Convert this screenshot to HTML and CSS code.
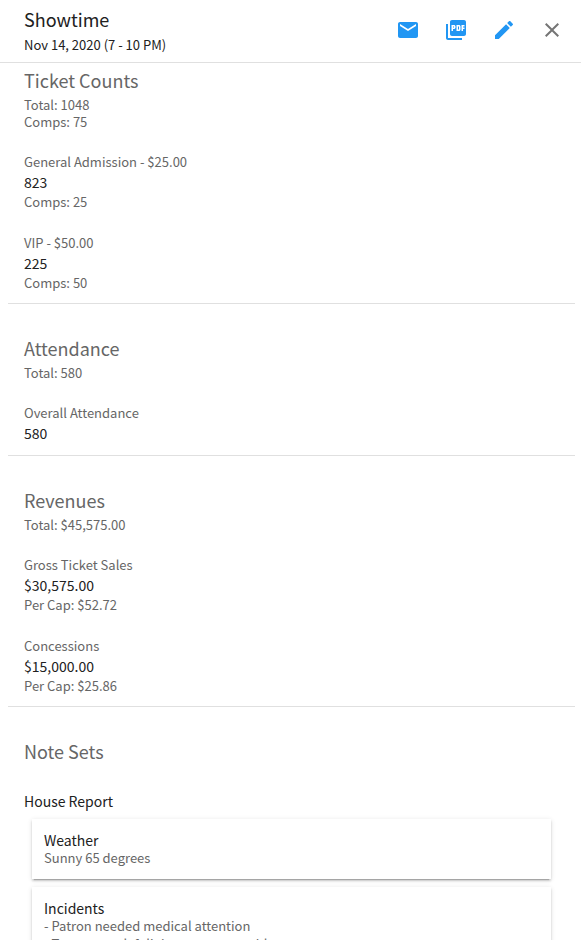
FILE: index.html
```html
<!DOCTYPE html>
<html lang="en">
<head>
  <meta charset="UTF-8">
  <meta name="viewport" content="width=device-width, initial-scale=1">
  <title>Showtime</title>
  <link rel="stylesheet" href="styles.css">
</head>
<body>
  <header class="toolbar">
    <div class="event">
      <h1>Showtime</h1>
      <p>Nov 14, 2020 (7 - 10 PM)</p>
    </div>
    <div class="actions">
      <button type="button" class="icon-button" aria-label="Email">
        <svg viewBox="0 0 24 24"><path d="M20 4H4c-1.1 0-1.99.9-1.99 2L2 18c0 1.1.9 2 2 2h16c1.1 0 2-.9 2-2V6c0-1.1-.9-2-2-2zm0 4l-8 5-8-5V6l8 5 8-5v2z"/></svg>
      </button>
      <button type="button" class="icon-button" aria-label="PDF">
        <svg viewBox="0 0 24 24"><path d="M20 2H8c-1.1 0-2 .9-2 2v12c0 1.1.9 2 2 2h12c1.1 0 2-.9 2-2V4c0-1.1-.9-2-2-2zm-8.500 7.500c0 .83-.67 1.500-1.500 1.500H9v2H7.500V7H10c.83 0 1.500.67 1.500 1.500v1zm5 2c0 .83-.67 1.500-1.500 1.500h-2.500V7H15c.83 0 1.500.67 1.500 1.500v3zm4-3H19v1h1.500V11H19v2h-1.500V7h3v1.500zM9 9.500h1v-1H9v1zM4 6H2v14c0 1.100.9 2 2 2h14v-2H4V6zm10 5.500h1v-3h-1v3z"/></svg>
      </button>
      <button type="button" class="icon-button" aria-label="Edit">
        <svg viewBox="0 0 24 24"><path d="M3 17.250V21h3.750L17.810 9.940l-3.750-3.750L3 17.250zM20.710 7.040c.39-.39.39-1.020 0-1.410l-2.340-2.340c-.39-.39-1.020-.39-1.410 0l-1.830 1.830 3.750 3.750 1.830-1.830z"/></svg>
      </button>
      <button type="button" class="icon-button close" aria-label="Close">
        <svg viewBox="0 0 24 24"><path d="M19 6.410L17.590 5 12 10.590 6.410 5 5 6.410 10.590 12 5 17.590 6.410 19 12 13.410 17.590 19 19 17.590 13.410 12z"/></svg>
      </button>
    </div>
  </header>

  <main>
    <section>
      <h2>Ticket Counts</h2>
      <p>Total: 1048</p>
      <p>Comps: 75</p>
      <div class="item">
        <h3>General Admission - $25.00</h3>
        <div class="value">823</div>
        <p>Comps: 25</p>
      </div>
      <div class="item">
        <h3>VIP - $50.00</h3>
        <div class="value">225</div>
        <p>Comps: 50</p>
      </div>
    </section>

    <section>
      <h2>Attendance</h2>
      <p>Total: 580</p>
      <div class="item">
        <h3>Overall Attendance</h3>
        <div class="value">580</div>
      </div>
    </section>

    <section>
      <h2>Revenues</h2>
      <p>Total: $45,575.00</p>
      <div class="item">
        <h3>Gross Ticket Sales</h3>
        <div class="value">$30,575.00</div>
        <p>Per Cap: $52.72</p>
      </div>
      <div class="item">
        <h3>Concessions</h3>
        <div class="value">$15,000.00</div>
        <p>Per Cap: $25.86</p>
      </div>
    </section>

    <section class="notes">
      <h2>Note Sets</h2>
      <h3 class="report-title">House Report</h3>
      <div class="cards">
        <article class="card">
          <h4>Weather</h4>
          <p>Sunny 65 degrees</p>
        </article>
        <article class="card">
          <h4>Incidents</h4>
          <p>- Patron needed medical attention</p>
          <p>- Temp stage left light gear was unable to start</p>
        </article>
      </div>
    </section>
  </main>
</body>
</html>
```
FILE: styles.css
```css
* {
  box-sizing: border-box;
}

html,
body {
  height: 100%;
}

body {
  display: flex;
  flex-direction: column;
  margin: 0;
  overflow: hidden;
  background: #fff;
  color: #212121;
  font-family: "Source Sans Pro", "Noto Sans CJK SC", sans-serif;
  font-size: 13px;
  line-height: 17px;
}

h1,
h2,
h3,
h4,
p {
  margin: 0;
  font-weight: 400;
}

.toolbar {
  display: flex;
  flex: none;
  align-items: center;
  justify-content: space-between;
  padding: 6px 5px 8px 24px;
  border-bottom: 1px solid #e0e0e0;
}

.toolbar h1 {
  font-size: 18px;
  line-height: 26px;
}

.toolbar p {
  margin-top: 4px;
  line-height: 18px;
}

.actions {
  display: flex;
}

.icon-button {
  display: flex;
  padding: 12px;
  border: none;
  background: none;
  color: #2196f3;
  cursor: pointer;
}

.icon-button svg {
  width: 24px;
  height: 24px;
  fill: currentColor;
}

.close {
  color: #757575;
}

main {
  flex: 1;
  min-height: 0;
  padding: 4px 6px 0 8px;
  overflow: hidden;
}

section {
  padding: 0 16px 11px;
  border-bottom: 1px solid #e0e0e0;
  color: #666;
}

section + section {
  padding-top: 31px;
}

h2 {
  margin-bottom: 3px;
  font-size: 18px;
  line-height: 26px;
}

.item {
  margin-top: 23px;
}

.item h3,
.item p,
.card p {
  font-size: 13px;
  line-height: 18px;
}

.value {
  color: #212121;
  font-size: 14px;
  line-height: 22px;
}

.notes {
  border-bottom: none;
}

.report-title {
  margin-top: 25px;
  color: #212121;
  font-size: 14px;
  line-height: 24px;
}

.cards {
  display: flex;
  flex-direction: column;
  gap: 8px;
  padding: 6px 8px;
}

.card {
  padding: 12px;
  background: #fff;
  box-shadow: 0 3px 1px -2px rgba(0, 0, 0, 0.2), 0 2px 2px rgba(0, 0, 0, 0.14), 0 1px 5px rgba(0, 0, 0, 0.12);
}

.card h4 {
  color: #212121;
  font-size: 14px;
  line-height: 18px;
}
```
